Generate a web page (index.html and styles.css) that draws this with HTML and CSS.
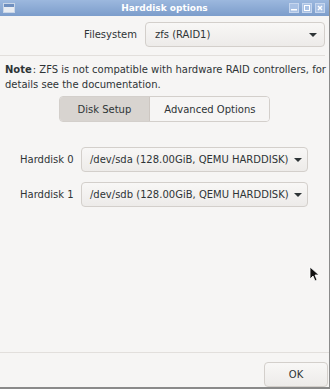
FILE: index.html
```html
<!DOCTYPE html>
<html lang="en">
  <head>
    <meta charset="UTF-8" />
    <title>Harddisk options</title>
    <link rel="stylesheet" href="styles.css">
  </head>
  <body>
    <div class="window">
      <div class="titlebar">
        <span class="win-icon"></span>
        <span class="title">Harddisk options</span>
        <div class="win-buttons">
          <span class="wbtn"><svg width="8" height="8" viewBox="0 0 8 8"><rect x="1" y="5" width="6" height="1.5" fill="#fff"/></svg></span>
          <span class="wbtn"><svg width="8" height="8" viewBox="0 0 8 8"><rect x="1.5" y="1.5" width="5" height="5" fill="none" stroke="#fff" stroke-width="1"/></svg></span>
          <span class="wbtn"><svg width="8" height="8" viewBox="0 0 8 8"><path d="M2 2L6 6M6 2L2 6" stroke="#fff" stroke-width="1.4"/></svg></span>
        </div>
      </div>
      <div class="content">
        <div class="fs-row">
          <label>Filesystem</label>
          <div class="combo wide">
            <span>zfs (RAID1)</span>
            <span class="arrow"></span>
          </div>
        </div>
        <div class="sep"></div>
        <p class="note"><strong>Note</strong>: ZFS is not compatible with hardware RAID controllers, for details see the documentation.</p>
        <div class="tabs">
          <span class="tab active">Disk Setup</span>
          <span class="tab">Advanced Options</span>
        </div>
        <div class="disks">
          <label>Harddisk 0</label>
          <div class="combo">
            <span>/dev/sda (128.00GiB, QEMU HARDDISK)</span>
            <span class="arrow"></span>
          </div>
          <label>Harddisk 1</label>
          <div class="combo">
            <span>/dev/sdb (128.00GiB, QEMU HARDDISK)</span>
            <span class="arrow"></span>
          </div>
        </div>
        <div class="spacer"></div>
        <div class="footer">
          <button>OK</button>
        </div>
      </div>
      <svg class="cursor" width="10" height="16" viewBox="0 0 10 16"><path d="M1 1L1 13L4 10L6 15L8 14L6 9L10 9Z" fill="#111" stroke="#fff" stroke-width="0.8"/></svg>
    </div>
  </body>
</html>
```
FILE: styles.css
```css
body {
  margin: 0;
  background: #fff;
  font-family: "DejaVu Sans", sans-serif;
  font-size: 10px;
  color: #2e3436;
}
.window {
  position: relative;
  width: 329px;
  height: 387px;
  border-right: 1px solid #8a8a8a;
  border-bottom: 2px solid #8a8a8a;
  background: #f6f5f4;
  display: flex;
  flex-direction: column;
}
.titlebar {
  height: 16px;
  background: linear-gradient(#9cb8de, #7c9dcb);
  display: flex;
  align-items: center;
  position: relative;
}
.win-icon {
  width: 10px;
  height: 8px;
  margin-left: 3px;
  border: 1px solid #c9d6e8;
  background: linear-gradient(#6f8fbf 0 3px, #e8ecf2 3px);
}
.title {
  position: absolute;
  left: 0;
  right: 0;
  text-align: center;
  color: #fff;
  font-weight: bold;
  font-size: 9px;
}
.win-buttons {
  margin-left: auto;
  margin-right: 4px;
  display: flex;
  gap: 3px;
  position: relative;
}
.wbtn {
  width: 8px;
  height: 8px;
  background: #a9c1e4;
  border: 1px solid #c6d6ee;
  display: flex;
}
.content {
  flex: 1;
  display: flex;
  flex-direction: column;
}
.fs-row {
  display: flex;
  align-items: center;
  justify-content: flex-end;
  gap: 8px;
  padding: 6px 4px 0 0;
}
.combo {
  box-sizing: border-box;
  height: 25px;
  border: 1px solid #d3cfcb;
  border-radius: 4px;
  background: linear-gradient(#f8f7f6, #edebe9);
  display: flex;
  align-items: center;
  padding: 0 7px 0 9px;
  color: #2e3436;
}
.combo.wide {
  width: 180px;
}
.arrow {
  margin-left: auto;
  width: 0;
  height: 0;
  border-left: 4px solid transparent;
  border-right: 4px solid transparent;
  border-top: 4px solid #2e3436;
}
.sep {
  height: 1px;
  background: #e2dfdc;
  margin: 8px 4px 0 0;
}
.note {
  margin: 6px 0 0 5px;
  line-height: 15px;
}
.note strong {
  margin-right: 1px;
}
.tabs {
  align-self: center;
  display: flex;
  margin-top: 4px;
  border: 1px solid #d3cfcb;
  border-radius: 4px;
  overflow: hidden;
}
.tab {
  height: 24px;
  display: flex;
  align-items: center;
  padding: 0 14px;
  background: #f6f5f4;
}
.tab.active {
  background: #d8d4d0;
  padding: 0 18px;
  border-right: 1px solid #cdc7c2;
}
.disks {
  display: grid;
  grid-template-columns: 55px 227px;
  justify-content: start;
  align-items: center;
  column-gap: 6px;
  row-gap: 10px;
  padding: 25px 0 0 20px;
}
.disks label {
  white-space: nowrap;
}
.disks .combo {
  padding-right: 5px;
  padding-left: 8px;
  white-space: nowrap;
}
.spacer {
  flex: 1;
}
.footer {
  border-top: 1px solid #e2dfdc;
  display: flex;
  justify-content: flex-end;
  padding: 9px 1px 0 0;
  height: 25px;
}
.footer button {
  width: 64px;
  height: 25px;
  font: inherit;
  color: #2e3436;
  border: 1px solid #d3cfcb;
  border-radius: 4px;
  background: linear-gradient(#f8f7f6, #edebe9);
}
.cursor {
  position: absolute;
  left: 309px;
  top: 266px;
}
```
